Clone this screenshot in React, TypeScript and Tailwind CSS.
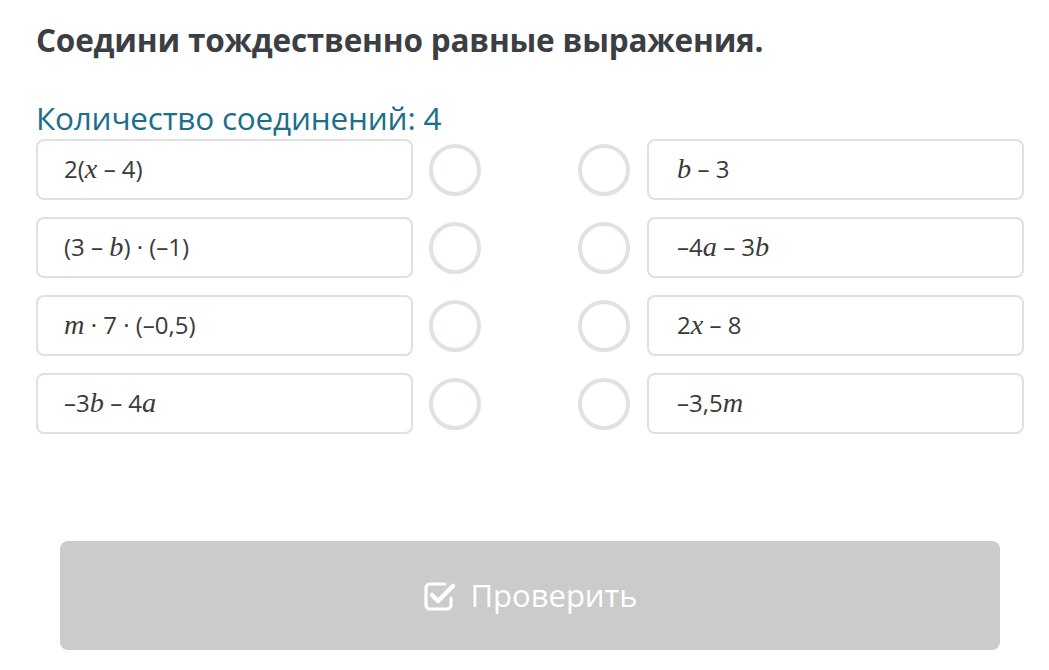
const M = ({ children }: { children: React.ReactNode }) => (
  <span className="font-['Times_New_Roman',Times,serif] italic text-[1.18em]">{children}</span>
);

const rows: [React.ReactNode, React.ReactNode][] = [
  [
    <>2(<M>x</M> – 4)</>,
    <><M>b</M> – 3</>,
  ],
  [
    <>(3 – <M>b</M>) · (–1)</>,
    <>–4<M>a</M> – 3<M>b</M></>,
  ],
  [
    <><M>m</M> · 7 · (–0,5)</>,
    <>2<M>x</M> – 8</>,
  ],
  [
    <>–3<M>b</M> – 4<M>a</M></>,
    <>–3,5<M>m</M></>,
  ],
];

const Box = ({ children, right }: { children: React.ReactNode; right?: boolean }) => (
  <div
    className={`h-[61px] w-[377px] rounded-lg border-2 border-[#e0e0e0] bg-white flex items-center text-[24px] text-[#3a3a3a] ${right ? 'pl-[28px]' : 'pl-[26px]'}`}
  >
    <span className="leading-none whitespace-pre">{children}</span>
  </div>
);

const Dot = () => (
  <div className="h-[52px] w-[52px] rounded-full border-[4px] border-[#dfe2e4] bg-white" />
);

const CheckIcon = () => (
  <svg width="34" height="32" viewBox="0 0 34 32" fill="none">
    <path
      d="M22 4H7a4 4 0 0 0-4 4v17a4 4 0 0 0 4 4h17a4 4 0 0 0 4-4v-7"
      stroke="white"
      strokeWidth="3.2"
      strokeLinecap="round"
    />
    <path d="M9 15l6 6L30 6" stroke="white" strokeWidth="4.5" strokeLinecap="round" strokeLinejoin="round" />
  </svg>
);

export default function App() {
  return (
    <div className="min-h-[670px] w-[1049px] bg-white font-['Open_Sans',sans-serif]">
      <div className="pl-[36px] pt-[20px]">
        <h1 className="text-[31.5px] font-bold text-[#3b3f43] leading-[40px] tracking-[-0.2px]">
          Соедини тождественно равные выражения.
        </h1>
        <div className="mt-[38px] text-[31.5px] leading-[40px] text-[#1b6f8c] tracking-[-0.2px]">
          Количество соединений: 4
        </div>
        <div className="mt-[1px] flex flex-col gap-[17px]">
          {rows.map(([l, r], i) => (
            <div key={i} className="flex items-center">
              <Box>{l}</Box>
              <div className="ml-[16px]">
                <Dot />
              </div>
              <div className="ml-[97px]">
                <Dot />
              </div>
              <div className="ml-[17px]">
                <Box right>{r}</Box>
              </div>
            </div>
          ))}
        </div>
      </div>
      <div className="px-[60px] pt-[107px] w-[1060px]">
        <button className="w-[940px] h-[109px] rounded-lg bg-[#cbcbcb] flex items-center justify-center gap-[14px] text-white text-[31px]">
          <CheckIcon />
          <span>Проверить</span>
        </button>
      </div>
    </div>
  );
}
